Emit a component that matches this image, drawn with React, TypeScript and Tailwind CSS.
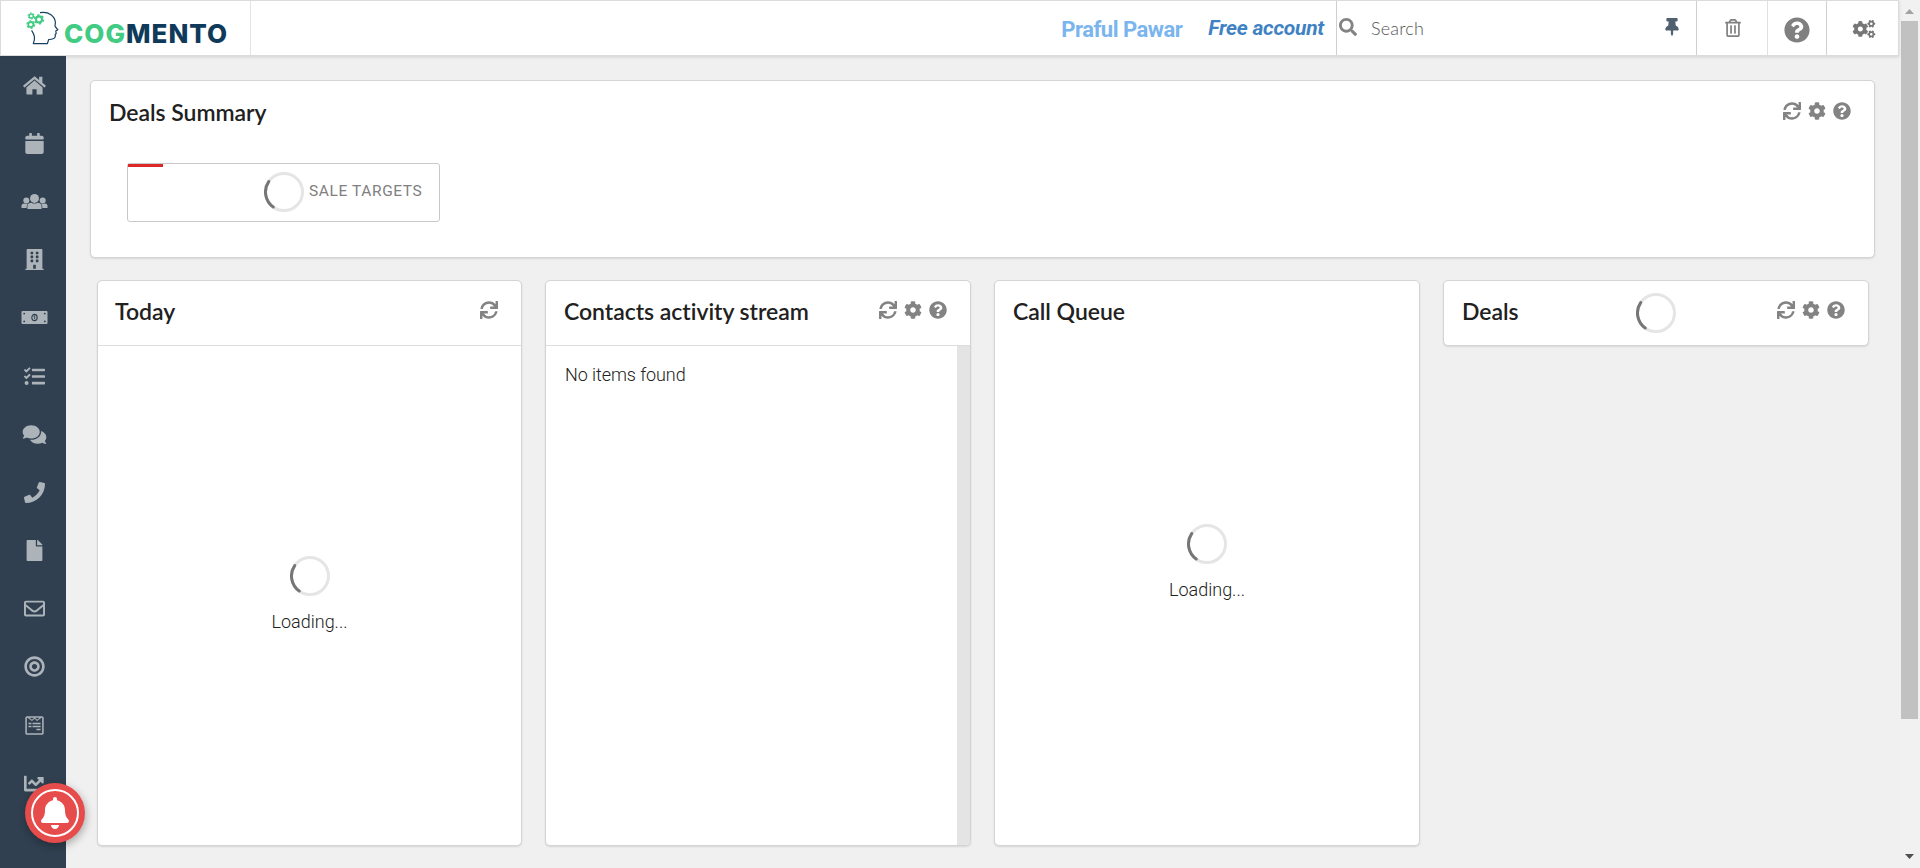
import type { ReactNode } from "react";
import {
  FaBell, FaBuilding, FaBullseye, FaCalendar, FaChartLine, FaCog, FaCogs, FaComments, FaFile,
  FaPhone, FaQuestionCircle, FaRegEnvelope, FaRegTrashAlt, FaSearch, FaSync, FaTasks,
  FaThumbtack, FaWpforms,
} from "react-icons/fa";

type IconProps = { className?: string };

function HomeIcon({ className }: IconProps) {
  return (
    <svg className={className} viewBox="0 0 27 21" fill="currentColor">
      <path d="M13.5 1.2 2.3 10.6a.5.5 0 0 0 0 .7l.9 1a.5.5 0 0 0 .7 0L13.5 4.2l9.6 8.1a.5.5 0 0 0 .7 0l.9-1a.5.5 0 0 0 0-.7L21.4 7.8V1.7h-3.3v3.4l-3.2-2.9c-.5-.5-.9-.8-1.4-1Z" />
      <path d="M13.5 5.6 5.4 12.4v6.4c0 .5.3.8.8.8h5.2v-5.4h4.2v5.4h5.2c.5 0 .8-.3.8-.8v-6.4Z" />
    </svg>
  );
}

function UsersIcon({ className }: IconProps) {
  return (
    <svg className={className} viewBox="0 0 27 21" fill="currentColor">
      <circle cx="13.5" cy="7.4" r="4.5" />
      <path d="M6.4 18v-2.400a4 4 0 0 1 4-3.900c2 1.200 4.200 1.200 6.200 0a4 4 0 0 1 4 3.900V18Z" />
      <circle cx="5.3" cy="9.600" r="3" />
      <circle cx="21.7" cy="9.600" r="3" />
      <path d="M.5 17v-1.900A2.600 2.600 0 0 1 3.100 12.500c1.200.6 2.800.6 4 0A6 6 0 0 0 5.700 15.300V17Z" />
      <path d="M26.500 17v-1.900A2.600 2.600 0 0 0 23.900 12.500c-1.200.6-2.800.6-4 0A6 6 0 0 1 21.300 15.300V17Z" />
    </svg>
  );
}

function MoneyIcon({ className }: IconProps) {
  return (
    <svg className={className} viewBox="0 0 27 21">
      <rect x=".5" y="4" width="26" height="13" rx="1" fill="currentColor" />
      <g fill="#304050">
        <circle cx="3.2" cy="6.6" r=".9" />
        <circle cx="23.8" cy="6.6" r=".9" />
        <circle cx="3.2" cy="14.4" r=".9" />
        <circle cx="23.8" cy="14.4" r=".9" />
      </g>
      <ellipse cx="13.5" cy="10.5" rx="2.7" ry="3.1" fill="none" stroke="#304050" strokeWidth="1.1" />
      <path d="M12.6 9.3l1.1-.6v3.5" fill="none" stroke="#304050" strokeWidth=".9" />
    </svg>
  );
}

const navItems = [
  HomeIcon, FaCalendar, UsersIcon, FaBuilding, MoneyIcon, FaTasks, FaComments, FaPhone, FaFile,
  FaRegEnvelope, FaBullseye, FaWpforms, FaChartLine,
];

function Spinner() {
  return (
    <svg className="block size-10 shrink-0" viewBox="0 0 40 40" fill="none" strokeWidth="3">
      <circle cx="20" cy="20" r="18.5" stroke="#e5e5e5" />
      <path d="M9.2 35 A18.5 18.5 0 0 1 4.7 9.6" stroke="#767676" strokeLinecap="round" />
    </svg>
  );
}

function Gear({ x, y, r }: { x: number; y: number; r: number }) {
  return (
    <g transform={`translate(${x} ${y})`} stroke="#41cb83" fill="none">
      <circle r={r * 0.6} strokeWidth={r * 0.42} />
      <circle r={r * 0.9} strokeWidth={r * 0.28} strokeDasharray={`${r * 0.47} ${r * 0.4725}`} />
    </g>
  );
}

function Logo() {
  return (
    <div className="flex h-full w-[250px] shrink-0 items-start border-r border-[#e4e4e4] pt-[10px] pl-[25px]">
      <svg className="block h-[35px] w-[34px]" viewBox="0 0 34 35" fill="none">
        <path
          d="M14 1.7 C23 .3 29 5 29.4 11.5 C29.3 13.5 28.7 14.5 29.2 15.5 L31.9 18.8 L29.8 20 L30.2 22.5 L29.2 23.5 L29.3 25.5 C29 28 26 28.3 22.7 28.5 L21.4 32.6 H7.3 C9.3 27.5 9 24.5 5.6 19.3"
          stroke="#17405f" strokeWidth="1.2" strokeLinejoin="round"
        />
        <Gear x={5.2} y={5} r={3.5} />
        <Gear x={13} y={8.4} r={5} />
        <Gear x={4.8} y={13.6} r={4.3} />
      </svg>
      <span className="mt-[8px] ml-[4px] font-['Inter'] text-[26px] leading-[30px] font-extrabold tracking-[1px] text-[#41cb83]">
        COG<span className="text-[#103a5a]">MENTO</span>
      </span>
    </div>
  );
}

function Header() {
  return (
    <header className="z-10 flex h-14 w-[1899px] shrink-0 border border-[#dbdbdb] bg-white shadow-[0_1px_3px_rgba(34,36,38,0.15)]">
      <Logo />
      <div className="flex flex-1 items-center justify-end pt-[2px]">
        <span className="mr-[26px] font-['Roboto'] text-[22px] font-bold tracking-[-0.5px] text-[#7ab5ee]">Praful Pawar</span>
        <span className="mr-[12px] font-['Roboto'] text-[21px] font-bold tracking-[-0.25px] text-[#3f82c4] italic">Free account</span>
      </div>
      <div className="flex w-[361px] items-center border-x border-[#cfcfcf] pl-[2px]">
        <FaSearch className="mb-[2px] size-[18px] text-[#838383]" />
        <span className="ml-[14px] flex-1 font-['Lato'] text-[18px] font-light tracking-[0.2px] text-[#555]">Search</span>
        <FaThumbtack className="mr-[15px] mb-[3px] h-[18px] w-[18px] text-[#50606f]" />
      </div>
      <div className="flex w-[71px] items-center justify-center border-r border-[#e0e0e0] pl-px">
        <FaRegTrashAlt className="h-[18px] w-[18px] text-[#808080]" />
      </div>
      <div className="flex w-[59px] items-center justify-center border-r border-[#d0d0d0]">
        <FaQuestionCircle className="mt-[3px] size-[26px] text-[#808080]" />
      </div>
      <div className="flex w-[71px] items-center justify-center pl-[2px]">
        <FaCogs className="mt-px h-[18px] w-[24px] text-[#767676]" />
      </div>
    </header>
  );
}

function Sidebar() {
  return (
    <nav className="flex w-[66px] shrink-0 flex-col overflow-hidden bg-[#304050] pl-[3px]">
      {navItems.map((Icon, i) => (
        <div key={i} className="flex h-[58.2px] shrink-0 items-center justify-center">
          <Icon className="h-[21px] w-[27px] text-[#acb3b9]" />
        </div>
      ))}
    </nav>
  );
}

function Tools({ only }: { only?: boolean }) {
  return (
    <div className="flex items-center gap-[7px] text-[#838383]">
      <FaSync className="size-[18px]" />
      {!only && <FaCog className="size-[18px]" />}
      {!only && <FaQuestionCircle className="size-[18px]" />}
    </div>
  );
}

function Title({ children }: { children: ReactNode }) {
  return <h3 className="-mt-px font-['Lato'] text-[23px] leading-[30px] font-semibold tracking-[-0.03px] text-[#212121]">{children}</h3>;
}

const card = "rounded-[5px] border border-[#d4d4d5] bg-white shadow-[0_1px_2px_rgba(34,36,38,0.12)]";

function Loading() {
  return (
    <div className="flex flex-col items-center">
      <Spinner />
      <span className="mt-[14px] font-['Roboto'] text-[18px] leading-6 font-light text-[#212121]">Loading...</span>
    </div>
  );
}

function Scrollbar() {
  return (
    <div className="flex w-[21px] shrink-0 flex-col items-center bg-[#f1f1f1]">
      <svg className="block h-[21px] w-[17px]" viewBox="0 0 17 21"><path d="M4 14 L8.5 9 L13 14Z" fill="#a3a3a3" /></svg>
      <div className="h-[698px] w-[17px] bg-[#c1c1c1]" />
      <div className="flex-1" />
      <svg className="block h-[21px] w-[17px]" viewBox="0 0 17 21"><path d="M4 7 L8.5 12 L13 7Z" fill="#505050" /></svg>
    </div>
  );
}

export default function App() {
  return (
    <div className="relative flex h-[868px] w-[1920px] overflow-hidden bg-[#f0f0f0] font-['Roboto']">
      <div className="flex w-[1899px] shrink-0 flex-col">
        <Header />
        <div className="flex min-h-0 flex-1">
          <Sidebar />
          <main className="flex-1 pt-6 pl-6">
            <section className={`${card} h-[178px] w-[1785px]`}>
              <div className="flex items-start justify-between pt-[17px] pr-[23px] pl-[18px]">
                <Title>Deals Summary</Title>
                <div className="mt-[4px]"><Tools /></div>
              </div>
              <div className="relative mt-[36px] ml-[36px] flex h-[59px] w-[313px] items-center rounded-[3px] border border-[#c9c9c9] pb-[2px] pl-[136px]">
                <div className="absolute top-0 left-0 h-[3px] w-[35px] bg-[#db2828]" />
                <Spinner />
                <span className="mt-px ml-[5px] font-['Roboto'] text-[15.5px] tracking-[0.6px] whitespace-nowrap text-[#808080]">SALE TARGETS</span>
              </div>
            </section>

            <div className="mt-[22px] ml-[7px] flex items-start gap-[23px]">
              <section className={`${card} flex h-[566px] w-[425px] flex-col border-[#cacaca]`}>
                <div className="flex h-[65px] shrink-0 items-start justify-between border-b border-[#dededf] pt-[16px] pr-[23px] pl-[17px]">
                  <Title>Today</Title>
                  <div className="mt-[4px]"><Tools only /></div>
                </div>
                <div className="flex flex-1 items-center justify-center pb-[2px]"><Loading /></div>
              </section>
              <section className={`${card} flex h-[566px] w-[426px] flex-col border-[#cacaca]`}>
                <div className="flex h-[65px] shrink-0 items-start justify-between border-b border-[#dededf] pt-[16px] pr-[23px] pl-[18px]">
                  <Title>Contacts activity stream</Title>
                  <div className="mt-[4px]"><Tools /></div>
                </div>
                <div className="flex flex-1 justify-between">
                  <p className="pt-[17px] pl-[19px] text-[18px] leading-6 font-light tracking-[-0.08px] text-[#212121]">No items found</p>
                  <div className="w-[13px] rounded-br-[4px] bg-[#e4e4e4]" />
                </div>
              </section>
              <section className={`${card} flex h-[566px] w-[426px] flex-col`}>
                <div className="pt-[16px] pl-[18px]"><Title>Call Queue</Title></div>
                <div className="flex flex-1 items-start justify-center pt-[198px]"><Loading /></div>
              </section>
              <section className={`${card} flex h-[66px] w-[426px] items-start pt-[16px] pr-[23px] pl-[18px]`}>
                <div className="w-[174px]"><Title>Deals</Title></div>
                <div className="-mt-[4px] flex-1"><Spinner /></div>
                <div className="mt-[4px]"><Tools /></div>
              </section>
            </div>
          </main>
        </div>
      </div>
      <Scrollbar />
      <button className="absolute top-[783px] left-[25px] flex size-[60px] items-center justify-center rounded-full bg-[#e74c4c] shadow-[1px_3px_8px_rgba(0,0,0,0.3)]">
        <span className="flex size-[48px] items-center justify-center rounded-full border-2 border-white">
          <FaBell className="size-[32px] text-white" />
        </span>
      </button>
    </div>
  );
}
